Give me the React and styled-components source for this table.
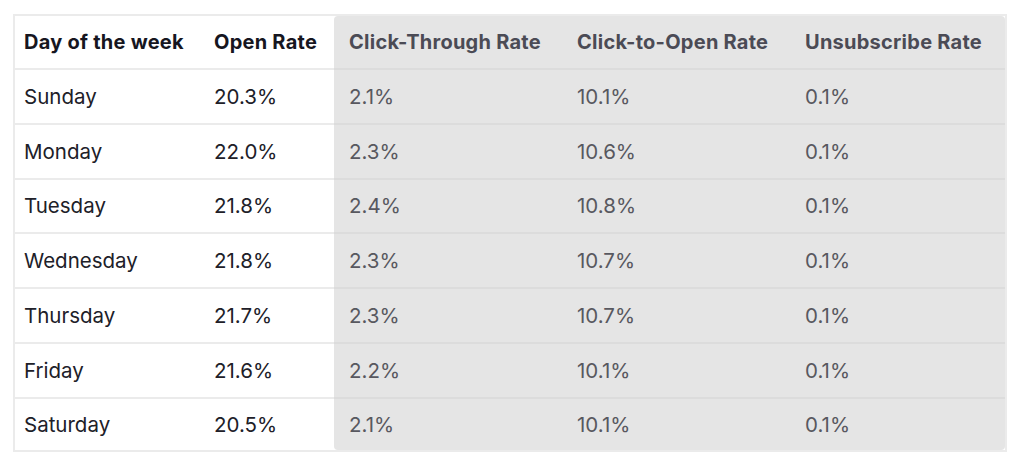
import React from "react";
import styled, { createGlobalStyle } from "styled-components";

const GlobalStyle = createGlobalStyle`
  body {
    margin: 0;
    background: #fff;
    font-family: Inter, "Liberation Sans", sans-serif;
  }
`;

const rows = [
  ["Sunday", "20.3%", "2.1%", "10.1%", "0.1%"],
  ["Monday", "22.0%", "2.3%", "10.6%", "0.1%"],
  ["Tuesday", "21.8%", "2.4%", "10.8%", "0.1%"],
  ["Wednesday", "21.8%", "2.3%", "10.7%", "0.1%"],
  ["Thursday", "21.7%", "2.3%", "10.7%", "0.1%"],
  ["Friday", "21.6%", "2.2%", "10.1%", "0.1%"],
  ["Saturday", "20.5%", "2.1%", "10.1%", "0.1%"],
];

const headers = [
  "Day of the week",
  "Open Rate",
  "Click-Through Rate",
  "Click-to-Open Rate",
  "Unsubscribe Rate",
];

const widths = [190, 129, 228, 228, 215];

const Page = styled.div`
  padding: 14px 0 0 13px;
`;

const Frame = styled.div`
  width: 990px;
  border: 2px solid #ebebeb;
`;

const Table = styled.table`
  width: 100%;
  border-collapse: separate;
  border-spacing: 0;
  table-layout: fixed;
`;

const HeadCell = styled.th`
  height: 52px;
  padding: 0 0 0 ${(p) => (p.$shaded ? "15px" : "9px")};
  text-align: left;
  font-size: 20px;
  font-weight: 700;
  letter-spacing: 0.25px;
  white-space: nowrap;
  color: ${(p) => (p.$shaded ? "#4b4b55" : "#16161f")};
  background: ${(p) => (p.$shaded ? "#e5e5e5" : "transparent")};
  border-bottom: 2px solid ${(p) => (p.$shaded ? "#dcdcdc" : "#ebebeb")};
  border-top-left-radius: ${(p) => (p.$first ? "4px" : "0")};
  border-top-right-radius: ${(p) => (p.$last ? "4px" : "0")};
`;

const Cell = styled.td`
  height: ${(p) => (p.$end ? "51px" : "52.8px")};
  padding: 0 0 0 ${(p) => (p.$shaded ? "15px" : "9px")};
  font-size: 20.5px;
  font-weight: 400;
  color: ${(p) => (p.$shaded ? "#58585f" : "#202028")};
  background: ${(p) => (p.$shaded ? "#e5e5e5" : "transparent")};
  border-bottom: ${(p) =>
    p.$end ? "none" : `2px solid ${p.$shaded ? "#dcdcdc" : "#ebebeb"}`};
  border-bottom-left-radius: ${(p) => (p.$end && p.$first ? "4px" : "0")};
  border-bottom-right-radius: ${(p) => (p.$end && p.$last ? "4px" : "0")};
`;

export default function App() {
  return (
    <Page>
      <GlobalStyle />
      <Frame>
        <Table>
          <colgroup>
            {widths.map((w, i) => (
              <col key={i} style={{ width: w }} />
            ))}
          </colgroup>
          <thead>
            <tr>
              {headers.map((h, i) => (
                <HeadCell key={h} $shaded={i > 1} $first={i === 2} $last={i === 4}>
                  {h}
                </HeadCell>
              ))}
            </tr>
          </thead>
          <tbody>
            {rows.map((r, ri) => (
              <tr key={r[0]}>
                {r.map((v, i) => (
                  <Cell
                    key={i}
                    $shaded={i > 1}
                    $first={i === 2}
                    $last={i === 4}
                    $end={ri === rows.length - 1}
                  >
                    {v}
                  </Cell>
                ))}
              </tr>
            ))}
          </tbody>
        </Table>
      </Frame>
    </Page>
  );
}
